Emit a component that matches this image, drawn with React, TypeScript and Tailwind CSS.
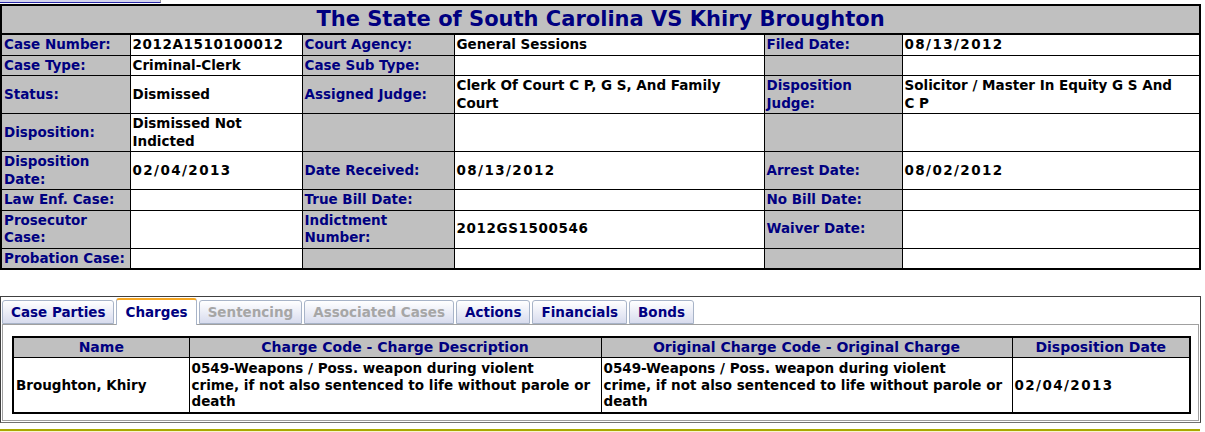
import React from 'react'

type Cell = { text: string; label?: boolean; track?: string }

const L = (text: string): Cell => ({ text, label: true })
const V = (text: string, track = ''): Cell => ({ text, track })

const DATE = 'tracking-[1.4px]'
const NUM = 'tracking-[0.6px]'

const caseRows: Cell[][] = [
  [L('Case Number:'), V('2012A1510100012', NUM), L('Court Agency:'), V('General Sessions'), L('Filed Date:'), V('08/13/2012', DATE)],
  [L('Case Type:'), V('Criminal-Clerk'), L('Case Sub Type:'), V(''), L(''), V('')],
  [
    L('Status:'),
    V('Dismissed'),
    L('Assigned Judge:'),
    V('Clerk Of Court C P, G S, And Family\nCourt'),
    L('Disposition\nJudge:'),
    V('Solicitor / Master In Equity G S And\nC P'),
  ],
  [L('Disposition:'), V('Dismissed Not\nIndicted'), L(''), V(''), L(''), V('')],
  [L('Disposition\nDate:'), V('02/04/2013', DATE), L('Date Received:'), V('08/13/2012', DATE), L('Arrest Date:'), V('08/02/2012', DATE)],
  [L('Law Enf. Case:'), V(''), L('True Bill Date:'), V(''), L('No Bill Date:'), V('')],
  [L('Prosecutor\nCase:'), V(''), L('Indictment\nNumber:'), V('2012GS1500546', NUM), L('Waiver Date:'), V('')],
  [L('Probation Case:'), V(''), L(''), V(''), L(''), V('')],
]

const tabs = [
  { name: 'Case Parties', state: 'normal' },
  { name: 'Charges', state: 'active' },
  { name: 'Sentencing', state: 'disabled' },
  { name: 'Associated Cases', state: 'disabled' },
  { name: 'Actions', state: 'normal' },
  { name: 'Financials', state: 'normal' },
  { name: 'Bonds', state: 'normal' },
]

const chargeText = '0549-Weapons / Poss. weapon during violent\ncrime, if not also sentenced to life without parole or\ndeath'

function CaseTable() {
  return (
    <table className="table-fixed border-collapse border-2 border-black w-[1199px] mt-px">
      <colgroup>
        <col className="w-[129px]" />
        <col className="w-[172px]" />
        <col className="w-[152px]" />
        <col className="w-[310px]" />
        <col className="w-[138px]" />
        <col className="w-[298px]" />
      </colgroup>
      <tbody>
        <tr>
          <td
            colSpan={6}
            className="bg-[#c0c0c0] border-2 border-black text-center text-[21px] leading-[27px] font-bold text-[#000080] py-0"
          >
            The State of South Carolina VS Khiry Broughton
          </td>
        </tr>
        {caseRows.map((row, i) => (
          <tr key={i}>
            {row.map((cell, j) => (
              <td
                key={j}
                className={`border border-black px-[2px] py-px align-middle whitespace-pre text-[13.5px] leading-[17.5px] font-bold ${
                  cell.label ? 'bg-[#c0c0c0] text-[#000080]' : 'bg-white text-black'
                } ${cell.track ?? ''}`}
              >
                {cell.text}
              </td>
            ))}
          </tr>
        ))}
      </tbody>
    </table>
  )
}

function Tabs() {
  return (
    <div className="flex items-end gap-[2px] h-[25px] relative z-10">
      {tabs.map((tab) => {
        if (tab.state === 'active') {
          return (
            <div
              key={tab.name}
              className="h-[27px] -mb-px px-[8px] bg-white border border-[#a8b4c8] border-t-2 border-t-[#f5a623] border-b-0 rounded-t-[3px] text-[#000080] text-[13.5px] font-bold leading-[24px]"
            >
              {tab.name}
            </div>
          )
        }
        return (
          <div
            key={tab.name}
            className={`h-[24px] px-[8px] border border-[#a8b4c8] rounded-t-[3px] bg-gradient-to-b from-white to-[#d8dcee] text-[13.5px] font-bold leading-[22px] ${
              tab.state === 'disabled' ? 'text-[#a6a6a6]' : 'text-[#000080]'
            }`}
          >
            {tab.name}
          </div>
        )
      })}
    </div>
  )
}

function ChargesTable() {
  const td = 'border border-black px-[2px] align-middle text-[13.5px] leading-[16.5px] font-bold'
  return (
    <table className="table-fixed border-collapse border-2 border-black w-[1177px]">
      <colgroup>
        <col className="w-[176px]" />
        <col className="w-[412px]" />
        <col className="w-[411px]" />
        <col className="w-[178px]" />
      </colgroup>
      <thead>
        <tr className="bg-[#c0c0c0]">
          {['Name', 'Charge Code - Charge Description', 'Original Charge Code - Original Charge', 'Disposition Date'].map((h) => (
            <th key={h} className="border border-black text-center text-[14px] leading-[19px] font-bold text-[#000080] py-0">
              {h}
            </th>
          ))}
        </tr>
      </thead>
      <tbody>
        <tr>
          <td className={td}>Broughton, Khiry</td>
          <td className={`${td} py-[2px] whitespace-pre`}>{chargeText}</td>
          <td className={`${td} py-[2px] whitespace-pre`}>{chargeText}</td>
          <td className={`${td} ${DATE}`}>02/04/2013</td>
        </tr>
      </tbody>
    </table>
  )
}

export default function App() {
  return (
    <div className="w-[1205px] h-[432px] bg-white font-['DejaVu_Sans',Verdana,sans-serif] text-black overflow-hidden">
      {/* top button edge */}
      <div className="w-[161px] h-[3px] bg-[#d4d4ee] border-b border-[#2a2aa8] border-r border-r-[#9a9a9a]" />

      <CaseTable />

      {/* tab panel */}
      <div className="mt-[26px] w-[1201px] border border-[#404040] border-b-[#707070] px-[1px] pt-[2px] pb-[1px]">
        <Tabs />
        <div className="border border-[#a0a0a0] pt-[11px] px-[9px] pb-[6px]">
          <ChargesTable />
        </div>
      </div>

      <div className="mt-[6px] w-[1200px] h-[3px] border-t-2 border-[#a8a800] bg-[#f6f6cc]" />
    </div>
  )
}
